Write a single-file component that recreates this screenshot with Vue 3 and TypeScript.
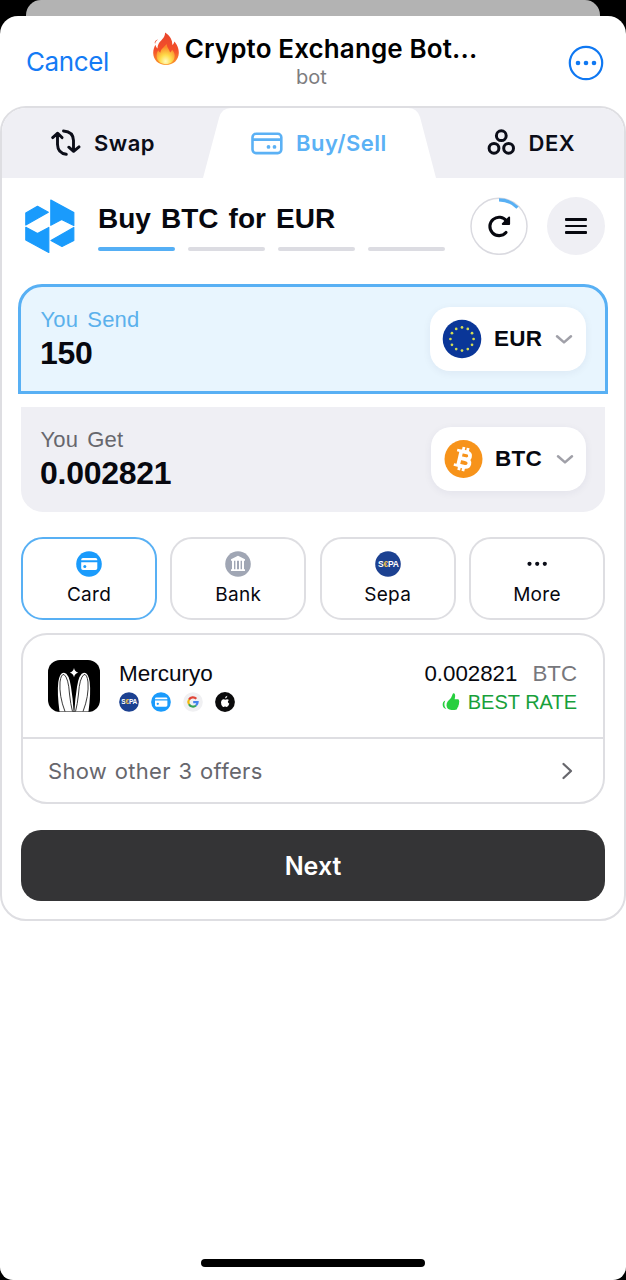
<script setup lang="ts">
import { ref } from 'vue'

const tabs = ref([
  { id: 'swap', label: 'Swap' },
  { id: 'buy', label: 'Buy/Sell' },
  { id: 'dex', label: 'DEX' },
])
const methods = ['Card', 'Bank', 'Sepa', 'More']
const activeMethod = ref('Card')
const steps = [1, 2, 3, 4]
const step = ref(1)
const stars = Array.from({ length: 12 }, (_, i) => ({
  x: 20 + 11.6 * Math.sin((i * Math.PI) / 6),
  y: 20 - 11.6 * Math.cos((i * Math.PI) / 6),
}))
</script>

<template>
  <div class="screen">
    <div class="back-sheet"></div>
    <div class="sheet">
      <header class="bar">
        <span class="cancel">Cancel</span>
        <div class="heading">
          <div class="title-line">
            <svg class="flame" width="28" height="34" viewBox="0 0 28 34">
              <defs>
                <linearGradient id="fo" x1="0" y1="0" x2="0" y2="1">
                  <stop offset="0" stop-color="#e8452c" />
                  <stop offset=".55" stop-color="#f4502a" />
                  <stop offset="1" stop-color="#fb9a2c" />
                </linearGradient>
                <radialGradient id="fi" cx=".5" cy=".85" r=".7">
                  <stop offset="0" stop-color="#fffbc0" />
                  <stop offset=".45" stop-color="#ffdc4a" />
                  <stop offset="1" stop-color="#fb8a2a" />
                </radialGradient>
              </defs>
              <path fill="url(#fo)" d="M13 .5c5 3 7.500 7.500 7.300 12.500 1.200-.8 1.800-2 2-3.500 2.500 2.500 4.700 7 4.500 11.500C26.600 28 21.500 33 14 33S1.300 28 1.200 21c0-3.600 1.200-6.500 2.300-8.300.3 1.700 1 3 2 3.800C5.600 11 9 9 11.300 6c1.200-1.700 1.900-3.500 1.700-5.500zM6 7.500c-1.700 1.200-2.700 2.600-2.800 4.300C2 10.500 3.300 8.300 6 7.500z" />
              <path fill="url(#fi)" d="M14.500 12c.5 3.500 3 5.500 3.600 8.500 1-.7 1.700-1.600 2-2.700 1.800 2 2.700 4 2.600 6.300-.2 5-3.700 8.200-8.700 8.200s-9.300-3.200-9.400-8.200c0-2.300.6-4.300 1.600-5.800.5 1.200 1.200 2 2.100 2.500.5-4 3.700-5.500 6.200-8.800z" />
            </svg>
            <span class="title">Crypto Exchange Bot...</span>
          </div>
          <div class="sub">bot</div>
        </div>
        <svg class="dots" width="36" height="36" viewBox="0 0 36 36" fill="#0f78f2">
          <circle cx="18" cy="18" r="16.200" fill="none" stroke="#0f78f2" stroke-width="2.200" />
          <circle cx="10" cy="18" r="2.300" /><circle cx="18" cy="18" r="2.300" /><circle cx="26" cy="18" r="2.300" />
        </svg>
      </header>

      <main class="widget">
        <nav class="tabs">
          <svg class="tab-shape" width="234" height="70" viewBox="0 0 234 70">
            <path fill="#fff" d="M0 70 16 10Q18.500 0 28 0H205Q214 0 217 9L233 70z" />
          </svg>
          <div v-for="t in tabs" :key="t.id" class="tab" :class="t.id">
            <svg v-if="t.id === 'swap'" width="30" height="28" viewBox="0 0 30 28" fill="none" stroke="#0b0d18" stroke-width="2.900" stroke-linecap="round" stroke-linejoin="round">
              <path d="M1.700 8.600 6.700 4.200 11 8.600M6.500 5V15.500Q6.800 24.300 15.300 25.300M12.500 2Q22.300 2.700 22.500 11.500V21.500M17.800 18.200 22.600 22.300 28 17.900" />
            </svg>
            <svg v-else-if="t.id === 'buy'" width="32" height="24" viewBox="0 0 32 24" fill="none" stroke="#5bb1f5" stroke-width="2.600">
              <rect x="1.500" y="2.800" width="28.800" height="19.300" rx="3.500" /><path d="M1.500 8.600H30" />
              <g fill="#5bb1f5" stroke="none"><circle cx="17.500" cy="15.900" r="1.900" /><circle cx="23.500" cy="15.900" r="1.900" /></g>
            </svg>
            <svg v-else width="28" height="28" viewBox="0 0 28 28" fill="none" stroke="#0b0d18" stroke-width="3">
              <circle cx="14.300" cy="6.700" r="4.900" /><circle cx="7" cy="19.300" r="4.900" /><circle cx="21.600" cy="19.300" r="4.900" />
            </svg>
            <span>{{ t.label }}</span>
          </div>
        </nav>

        <section class="intro">
          <svg class="logo" width="50" height="56" viewBox="0 0 50 56" fill="#1a9bfc" stroke="#1a9bfc" stroke-width="1.200" stroke-linejoin="round">
            <path d="M.8 14 12.500 7.300 23.300 13.200 .8 26z" />
            <path d="M25.800 1 48.800 13.600V26.500L36.600 20.500 25.800 26.300z" />
            <path d="M.8 28.300 12.500 34.600 23.800 28.500V53.500L.8 41z" />
            <path d="M48.800 28.500V41.500L37 47.500 26 41.500z" />
          </svg>
          <div class="intro-text">
            <h1>Buy BTC for EUR</h1>
            <div class="steps"><i v-for="s in steps" :key="s" :class="{ on: s <= step }"></i></div>
          </div>
          <svg class="refresh" width="58" height="58" viewBox="0 0 58 58" fill="none">
            <circle cx="29" cy="29.300" r="28" stroke="#dadae0" stroke-width="1.500" />
            <path d="M29 2.800A26.500 26.500 0 0 1 47.500 10.600" stroke="#58b0f4" stroke-width="3.200" />
            <path d="M36 35.500A9.200 9.200 0 1 1 36.600 24.100" stroke="#07080f" stroke-width="3.100" stroke-linecap="round" />
            <path d="M39.200 20.500V27H32.700z" fill="#07080f" stroke="#07080f" stroke-width="1.800" stroke-linejoin="round" />
          </svg>
          <div class="menu"><i></i><i></i><i></i></div>
        </section>

        <section class="field send">
          <div>
            <div class="lbl">You Send</div>
            <div class="amount">150</div>
          </div>
          <div class="pill">
            <svg width="40" height="40" viewBox="0 0 40 40">
              <circle cx="20" cy="20" r="19.300" fill="#0a3698" />
              <circle v-for="(s, i) in stars" :key="i" :cx="s.x" :cy="s.y" r="1.350" fill="#d3dc55" />
            </svg>
            <span class="eur">EUR</span>
            <svg class="chev" width="18" height="11" viewBox="0 0 18 11"><path d="M2 2.300 9 8.400 16 2.300" /></svg>
          </div>
        </section>

        <section class="field get">
          <div>
            <div class="lbl">You Get</div>
            <div class="amount">0.002821</div>
          </div>
          <div class="pill">
            <svg width="40" height="40" viewBox="0 0 40 40">
              <circle cx="20.500" cy="20" r="19" fill="#f7931a" />
              <g transform="translate(20.300 20) rotate(13)" fill="none" stroke="#fff">
                <path stroke-width="3.700" stroke-linejoin="round" d="M-3.600-7.300H2Q6-7.100 6-3.700T2-.3H-3.600M2-.3Q7-.1 7 3.600T2 7.400H-3.600M-3.700-7.300V7.400" />
                <path stroke-width="2.800" d="M-8-7.400H-3M-8 7.500H-3M-2-11.800V-7M2.300-11.800V-7M-2 7V11.900M2.300 7V11.900" />
              </g>
            </svg>
            <span class="btc">BTC</span>
            <svg class="chev" width="18" height="11" viewBox="0 0 18 11"><path d="M2 2.300 9 8.400 16 2.300" /></svg>
          </div>
        </section>

        <section class="methods">
          <button v-for="m in methods" :key="m" class="method" :class="{ active: m === activeMethod }">
            <svg v-if="m === 'Card'" width="26" height="26" viewBox="0 0 26 26">
              <circle cx="13" cy="13" r="12.800" fill="#1a9bfc" />
              <path fill="#fff" d="M7 7H19.500Q21.300 7 21.300 8.800V9.300H5.200V8.800Q5.200 7 7 7zM5.200 11.200H21.300V17.300Q21.300 19.100 19.500 19.100H7Q5.200 19.100 5.200 17.300z" /><circle cx="8.800" cy="15.400" r="1.500" fill="#1a9bfc" />
            </svg>
            <svg v-else-if="m === 'Bank'" width="26" height="26" viewBox="0 0 26 26">
              <circle cx="13" cy="13" r="12.800" fill="#a0a6b4" />
              <path fill="#fff" d="M13 4.800 20 8.300V9.800H6V8.300zM6 18.200H20V20H6zM7 9.800H9V18.200H7zM10.400 9.800H12V18.200H10.400zM14 9.800H15.600V18.200H14zM17 9.800H19V18.200H17z" />
            </svg>
            <svg v-else-if="m === 'Sepa'" width="26" height="26" viewBox="0 0 26 26">
              <circle cx="13" cy="13" r="12.800" fill="#1c4191" />
              <text x="2.900" y="16" class="sepa">S<tspan fill="#efc24a">€</tspan>PA</text>
            </svg>
            <svg v-else width="26" height="26" viewBox="0 0 26 26" fill="#0b0d18"><circle cx="5.500" cy="12.800" r="2.100" /><circle cx="13.200" cy="12.800" r="2.100" /><circle cx="20.800" cy="12.800" r="2.100" /></svg>
            <span>{{ m }}</span>
          </button>
        </section>

        <section class="offers">
          <div class="offer">
            <svg class="merc" width="52" height="52" viewBox="0 0 52 52">
              <rect width="52" height="52" rx="12" fill="#000" />
              <path d="M26 8Q26.800 11.900 30.200 12.700 26.800 13.500 26 17.200 25.200 13.500 21.800 12.700 25.200 11.900 26 8z" fill="#fff" />
              <g fill="#fff">
                <path d="M11.500 51.500Q9 33 10.300 22 11.700 12.500 16 12.700 21 13.200 23 27 25 39 25.600 51.500z" />
                <path d="M40.500 51.500Q43 33 41.700 22 40.300 12.500 36 12.700 31 13.200 29 27 27 39 26.400 51.500z" />
              </g>
              <g fill="none" stroke="#222" stroke-width=".9">
                <path d="M17 51.500Q11 36 12 22Q13 14 16 14.500 20.500 18 21.500 34 22.500 44 24.500 51.500" />
                <path d="M35 51.500Q41 36 40 22Q39 14 36 14.500 31.500 18 30.500 34 29.500 44 27.500 51.500" />
              </g>
            </svg>
            <div class="provider">
              <div class="name">Mercuryo</div>
              <div class="badges">
                <svg width="20" height="20" viewBox="0 0 26 26"><circle cx="13" cy="13" r="12.800" fill="#1c4191" /><text x="2.900" y="16" class="sepa">S<tspan fill="#efc24a">€</tspan>PA</text></svg>
                <svg width="20" height="20" viewBox="0 0 26 26"><circle cx="13" cy="13" r="12.800" fill="#1a9bfc" /><path fill="#fff" d="M7 7H19.500Q21.300 7 21.300 8.800V9.300H5.200V8.800Q5.200 7 7 7zM5.200 11.200H21.300V17.300Q21.300 19.100 19.500 19.100H7Q5.200 19.100 5.200 17.300z" /><circle cx="8.800" cy="15.400" r="1.500" fill="#1a9bfc" /></svg>
                <svg width="20" height="20" viewBox="0 0 20 20" fill="none" stroke-width="2.200">
                  <circle cx="10" cy="10" r="9.800" fill="#f0f0f2" />
                  <path stroke="#e04436" d="M6 7.600A4.600 4.600 0 0 1 13.300 6.800" /><path stroke="#f2b90c" d="M6 12.200A4.600 4.600 0 0 1 6 7.600" />
                  <path stroke="#34a255" d="M13 13.500A4.600 4.600 0 0 1 6 12.200" /><path stroke="#4383ee" d="M10.200 10.100H14.600Q14.600 12.200 13 13.500" />
                </svg>
                <svg width="20" height="20" viewBox="0 0 20 20">
                  <circle cx="10" cy="10" r="9.900" fill="#0b0b0c" />
                  <path fill="#fff" d="M12.400 3.800Q12.500 6 10 6.600 9.900 4.500 12.400 3.800zM13.900 7.900Q11.600 9.700 14.300 11.800 13.200 15 11.700 15 10.800 14.500 9.900 14.600 8.700 15.200 8 14.900 5.800 13.200 6 10.200 6.500 7.200 8.900 7.300L10.200 7.700Q12.400 6.600 13.900 7.900z" />
                </svg>
              </div>
            </div>
            <div class="quote">
              <div class="value"><span>0.002821</span><span class="unit">BTC</span></div>
              <div class="best">
                <svg width="18" height="18" viewBox="0 0 18 18" fill="#27cf3f">
                  <path d="M5.800 8.300Q9.500 5.800 10.600 1.200 10.900 0 12 .3 14 1.200 12.600 6.300H16Q17.300 6.400 17 7.800 17.600 8.700 17 10 17.200 11.300 16.500 12.200 16.600 13.600 15.600 14.500 15.300 17 12.500 17H9.500Q4.800 16.500 4.500 12.500 4.400 10 5.800 8.300z" />
                  <path d="M3.300 7.500Q.3 8.700.7 12.300 1.200 15.600 4.300 16 2.600 14.500 2.400 12 2.300 9.500 3.300 7.500z" />
                </svg>
                <span>BEST RATE</span>
              </div>
            </div>
          </div>
          <div class="others">
            <span>Show other 3 offers</span>
            <svg width="12" height="18" viewBox="0 0 12 18" fill="none" stroke="#67676d" stroke-width="2.300" stroke-linecap="round" stroke-linejoin="round"><path d="M2.500 2 10 9 2.500 16" /></svg>
          </div>
        </section>

        <button class="next">Next</button>
      </main>
      <div class="home"></div>
    </div>
  </div>
</template>

<style>
body { background: #000; }
</style>

<style scoped>
* { box-sizing: border-box; }
.screen { width: 626px; height: 1280px; background: #000; font-family: Inter, "Liberation Sans", sans-serif; color: #07080f; overflow: hidden; }
.screen span, h1, .lbl, .amount, .name, .sub { white-space: nowrap; }
svg { display: block; flex: none; }
.back-sheet { height: 16px; margin: 0 26px; background: #b3b3b3; border-radius: 15px 15px 0 0; }
.sheet { height: 1264px; background: #fff; border-radius: 18px 18px 13px 13px; display: flex; flex-direction: column; }
.bar { height: 90px; flex: none; display: grid; grid-template-columns: 120px 1fr 120px; }
.cancel { padding-left: 26px; font-size: 26px; line-height: 92px; color: #147bf5; letter-spacing: -.4px; }
.heading { padding-top: 15px; }
.title-line { display: flex; align-items: center; justify-content: center; height: 36px; gap: 5px; padding-left: 3px; }
.title { font-size: 26px; line-height: 36px; font-weight: 600; color: #000; letter-spacing: .13px; }
.sub { font-size: 20px; line-height: 20px; color: #7d7d80; text-align: center; padding-right: 3px; }
.dots { justify-self: end; margin: 28.500px 22px 0 0; }

.widget { height: 815px; flex: none; border: 2px solid #dedee2; border-radius: 26px; overflow: hidden; padding-bottom: 18px; }
.tabs { height: 70px; background: #efeff4; display: grid; grid-template-columns: 201px 232px 189px; position: relative; }
.tab-shape { position: absolute; left: 201px; top: 0; }
.tab { position: relative; display: flex; align-items: center; font-size: 22px; font-weight: 600; color: #0b0d18; letter-spacing: .5px; }
.tab.swap { padding-left: 49px; gap: 13px; }
.tab.buy { padding-left: 47.500px; gap: 13.500px; color: #5bb1f5; }
.tab.dex { padding-left: 52px; gap: 13.500px; }

.intro { display: flex; height: 106px; padding: 19px 19px 0 23px; }
.logo { margin-top: 2px; }
.intro-text { margin-left: 23px; width: 347px; padding-top: 2px; }
h1 { margin: 0; font: bold 28px/40px "Liberation Sans", sans-serif; word-spacing: 2.300px; }
.steps { display: flex; gap: 13px; margin-top: 8px; }
.steps i { width: 77px; height: 3.500px; border-radius: 2px; background: #dcdce2; }
.steps i.on { background: #55aff5; }
.refresh { margin-left: 25px; }
.menu { width: 58px; height: 58px; margin-left: 19px; border-radius: 50%; background: #efeff4; display: flex; flex-direction: column; align-items: center; justify-content: center; gap: 4px; }
.menu i { width: 22px; height: 2.500px; border-radius: 1px; background: #07080f; }

.field { display: flex; justify-content: space-between; font-family: "Liberation Sans", sans-serif; }
.send { height: 110px; margin: 0 16px; border: 3px solid #58b0f4; border-radius: 24px 24px 0 0; background: #e8f5fe; padding: 20px 19px 0; }
.get { height: 105px; margin: 13px 19px 0; border-radius: 0 0 22px 22px; background: #efeff4; padding: 20px 19px 0; }
.lbl { font-size: 22px; line-height: 26px; color: #67676d; word-spacing: 3px; letter-spacing: .15px; padding-left: .5px; }
.send .lbl { color: #5bb1ec; }
.amount { font-size: 32px; line-height: 40px; font-weight: bold; letter-spacing: -.28px; }
.pill { width: 156px; height: 64px; border-radius: 20px; background: #fff; box-shadow: 0 2px 8px rgba(30, 40, 80, .06); display: flex; align-items: center; padding-left: 12px; font-size: 22.500px; font-weight: bold; letter-spacing: .3px; }
.get .pill { width: 155px; }
.pill span { margin-left: 12px; width: 49px; }
.chev { margin-left: 12px; fill: none; stroke: #a0a0a8; stroke-width: 2.500; stroke-linecap: round; stroke-linejoin: round; }

.methods { display: grid; grid-template-columns: repeat(4, 1fr); gap: 13.300px; margin: 25px 19px 0; }
.method { height: 83px; border: 2px solid #dedee2; border-radius: 22px; background: #fff; padding: 12px 0 0; display: flex; flex-direction: column; align-items: center; font: 19px/26px Inter, sans-serif; letter-spacing: .3px; color: #07080f; gap: 5px; }
.method.active { border-color: #58b0f4; }
.sepa { font: bold 8.500px "Liberation Sans", sans-serif; fill: #fff; letter-spacing: -.2px; }

.offers { height: 171px; margin: 13px 19px 0; border: 2px solid #dedee2; border-radius: 26px; }
.offer { height: 104px; border-bottom: 2px solid #dedee2; display: flex; padding: 25px 26px 0 25px; }
.provider { margin-left: 19px; }
.name { font: 22.500px/28px "Liberation Sans", sans-serif; }
.badges { display: flex; gap: 12px; margin-top: 4px; }
.quote { margin-left: auto; font-family: "Liberation Sans", sans-serif; }
.value { display: flex; justify-content: flex-end; gap: 15px; font-size: 22.300px; line-height: 28px; }
.unit { color: #77777c; }
.best { display: flex; justify-content: flex-end; align-items: center; gap: 8px; font-size: 20px; line-height: 28px; color: #17a03a; }
.others { height: 63px; display: flex; align-items: center; justify-content: space-between; padding: 0 30px 0 25px; font-size: 22px; letter-spacing: .3px; word-spacing: 1.200px; color: #67676d; }
.next { display: block; width: 584px; height: 71px; margin: 26px 19px 0; border: 0; border-radius: 20px; background: #343436; color: #fff; font: 600 25px/71px Inter, sans-serif; padding: 1px 0 0; }
.home { width: 224px; height: 8px; border-radius: 4px; background: #000; margin: auto auto 13px; }
</style>
